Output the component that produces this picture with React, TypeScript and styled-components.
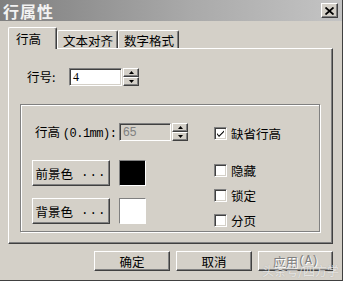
import React from "react";
import styled, { createGlobalStyle, css } from "styled-components";

const Global = createGlobalStyle`
  html, body { margin: 0; padding: 0; background: #d4d0c8; }
  * { box-sizing: border-box; }
  body { font-family: "SimSun", "Noto Sans CJK SC", sans-serif; font-size: 12px; color: #000; }
`;

const raised = css`
  border-top: 1px solid #ffffff;
  border-left: 1px solid #ffffff;
  border-right: 1px solid #404040;
  border-bottom: 1px solid #404040;
  box-shadow: inset -1px -1px 0 #808080;
`;

const sunken = css`
  border-top: 1px solid #808080;
  border-left: 1px solid #808080;
  border-right: 1px solid #ffffff;
  border-bottom: 1px solid #ffffff;
  box-shadow: inset 1px 1px 0 #404040, inset -1px -1px 0 #d4d0c8;
`;

const Window = styled.div`
  width: 343px;
  height: 281px;
  background: #d4d0c8;
  border-right: 1px solid #404040;
  border-bottom: 1px solid #404040;
  display: flex;
  flex-direction: column;
  overflow: hidden;
  position: relative;
`;

const TitleBar = styled.div`
  height: 21px;
  background: linear-gradient(to right, #7f7f7f, #a9a9a9 55%, #c4c4c4);
  display: flex;
  align-items: center;
  justify-content: space-between;
  padding: 0 4px 0 3px;
`;

const Title = styled.span`
  color: #f2f2f2;
  font-weight: bold;
  font-size: 16px;
  letter-spacing: 1px;
  font-family: "Noto Sans CJK SC", sans-serif;
  line-height: 20px;
`;

const CloseBtn = styled.div`
  width: 17px;
  height: 15px;
  background: #d4d0c8;
  ${raised};
  display: flex;
  align-items: center;
  justify-content: center;
`;

const Body = styled.div`
  flex: 1;
  display: flex;
  flex-direction: column;
  padding: 6px 9px 0 8px;
`;

const TabRow = styled.div`
  display: flex;
  align-items: flex-end;
  height: 21px;
  position: relative;
  z-index: 1;
`;

const Tab = styled.div<{ $active?: boolean }>`
  height: ${(p) => (p.$active ? 22 : 18)}px;
  padding: ${(p) => (p.$active ? "3px 15px 0 7px" : "2px 4px 0 5px")};
  margin-bottom: ${(p) => (p.$active ? -1 : 0)}px;
  background: #d4d0c8;
  border-top: 1px solid #ffffff;
  border-left: 1px solid #ffffff;
  border-right: 1px solid #404040;
  box-shadow: inset -1px 0 0 #808080;
  border-radius: 2px 2px 0 0;
  font-family: "Noto Sans CJK SC", sans-serif;
  font-size: 12.5px;
  line-height: 15px;
  white-space: nowrap;
`;

const Panel = styled.div`
  height: 196px;
  ${raised};
  padding: 18px 11px 0 11px;
  display: flex;
  flex-direction: column;
`;

const Row = styled.div<{ $gap?: number; $indent?: number }>`
  display: flex;
  align-items: center;
  gap: ${(p) => p.$gap ?? 0}px;
  margin-left: ${(p) => p.$indent ?? 0}px;
`;

const Label = styled.span<{ $w?: number }>`
  width: ${(p) => (p.$w ? `${p.$w}px` : "auto")};
  font-family: "Noto Sans CJK SC", sans-serif;
  font-size: 12.5px;
  white-space: nowrap;
  color: #000;
`;

const Mono = styled.span`
  font-family: "Liberation Mono", monospace;
  font-size: 12px;
  letter-spacing: -0.5px;
`;

const Input = styled.div<{ $w: number; $disabled?: boolean }>`
  width: ${(p) => p.$w}px;
  height: 18px;
  ${sunken};
  background: ${(p) => (p.$disabled ? "#d4d0c8" : "#ffffff")};
  color: ${(p) => (p.$disabled ? "#808080" : "#000")};
  font-family: ${(p) => (p.$disabled ? '"Liberation Sans", sans-serif' : '"Liberation Serif", serif')};
  font-size: 12px;
  padding: 1px 0 0 3px;
  line-height: 15px;
`;

const Spin = styled.div`
  display: flex;
  flex-direction: column;
  width: 16px;
  height: 18px;
  margin-left: 1px;
`;

const SpinBtn = styled.div`
  flex: 1;
  background: #d4d0c8;
  ${raised};
  display: flex;
  align-items: center;
  justify-content: center;
`;

const Group = styled.div`
  margin-top: 18px;
  height: 128px;
  border: 1px solid #808080;
  box-shadow: 1px 1px 0 #ffffff, inset 1px 1px 0 #ffffff;
  display: flex;
  padding: 17px 0 0 14px;
  margin-right: 1px;
`;

const LeftCol = styled.div`
  width: 179px;
  display: flex;
  flex-direction: column;
`;

const RightCol = styled.div`
  display: flex;
  flex-direction: column;
  padding-top: 2px;
`;

const ColorRow = styled.div<{ $top: number }>`
  display: flex;
  align-items: center;
  gap: 9px;
  margin-top: ${(p) => p.$top}px;
  margin-left: -3px;
`;

const Button = styled.div<{ $w: number; $h: number; $disabled?: boolean }>`
  width: ${(p) => p.$w}px;
  height: ${(p) => p.$h}px;
  background: #d4d0c8;
  ${raised};
  display: flex;
  align-items: center;
  justify-content: center;
  font-family: "Noto Sans CJK SC", sans-serif;
  font-size: 12.5px;
  white-space: nowrap;
  color: ${(p) => (p.$disabled ? "#808080" : "#000")};
  text-shadow: ${(p) => (p.$disabled ? "1px 1px 0 #ffffff" : "none")};
`;

const Dots = styled.span`
  font-family: "Liberation Mono", monospace;
  letter-spacing: 1px;
  margin-left: 8px;
`;

const Swatch = styled.div<{ $color: string }>`
  width: 27px;
  height: 26px;
  background: ${(p) => p.$color};
  border: 1px solid #808080;
  border-right-color: #ffffff;
  border-bottom-color: #ffffff;
`;

const CheckRow = styled.div<{ $top: number }>`
  display: flex;
  align-items: center;
  gap: 4px;
  margin-top: ${(p) => p.$top}px;
`;

const CheckBox = styled.div`
  width: 13px;
  height: 13px;
  background: #fff;
  ${sunken};
  display: flex;
  align-items: center;
  justify-content: center;
`;

const Footer = styled.div`
  display: flex;
  justify-content: flex-end;
  gap: 6px;
  margin-top: 7px;
`;

const Watermark = styled.div`
  position: absolute;
  right: 3px;
  bottom: 1px;
  font-family: "Noto Sans CJK SC", sans-serif;
  font-size: 12px;
  color: rgba(255, 255, 255, 0.7);
  text-shadow: 0 0 1px rgba(120, 120, 120, 0.5);
  pointer-events: none;
`;

const Up = () => (
  <svg width="5" height="3" viewBox="0 0 5 3"><path d="M2.5 0 L5 3 L0 3Z" fill="#000" /></svg>
);
const Down = () => (
  <svg width="5" height="3" viewBox="0 0 5 3"><path d="M0 0 L5 0 L2.5 3Z" fill="#000" /></svg>
);

const Spinner = () => (
  <Spin>
    <SpinBtn><Up /></SpinBtn>
    <SpinBtn><Down /></SpinBtn>
  </Spin>
);

const Check = ({ checked }: { checked?: boolean }) => (
  <CheckBox>
    {checked && (
      <svg width="9" height="9" viewBox="0 0 9 9">
        <path d="M1 4 L3 6.5 L8 1.5 L8 3 L3 8 L1 5.5Z" fill="#000" />
      </svg>
    )}
  </CheckBox>
);

export default function App() {
  return (
    <>
      <Global />
      <Window>
        <TitleBar>
          <Title>行属性</Title>
          <CloseBtn>
            <svg width="9" height="8" viewBox="0 0 9 8">
              <path d="M0.5 0.5 L8.5 7.5 M8.5 0.5 L0.5 7.5" stroke="#000" strokeWidth="1.8" />
            </svg>
          </CloseBtn>
        </TitleBar>
        <Body>
          <TabRow>
            <Tab $active>行高</Tab>
            <Tab>文本对齐</Tab>
            <Tab>数字格式</Tab>
          </TabRow>
          <Panel>
            <Row $indent={7}>
              <Label $w={42}>行号:</Label>
              <Input $w={53}>4</Input>
              <Spinner />
            </Row>
            <Group>
              <LeftCol>
                <Row>
                  <Label $w={84}>
                    行高 <Mono>(0.1mm):</Mono>
                  </Label>
                  <Input $w={52} $disabled>65</Input>
                  <Spinner />
                </Row>
                <ColorRow $top={19}>
                  <Button $w={78} $h={26}>前景色<Dots>...</Dots></Button>
                  <Swatch $color="#000000" />
                </ColorRow>
                <ColorRow $top={12}>
                  <Button $w={78} $h={26}>背景色<Dots>...</Dots></Button>
                  <Swatch $color="#ffffff" />
                </ColorRow>
              </LeftCol>
              <RightCol>
                <CheckRow $top={0}>
                  <Check checked />
                  <Label>缺省行高</Label>
                </CheckRow>
                <CheckRow $top={18}>
                  <Check />
                  <Label>隐藏</Label>
                </CheckRow>
                <CheckRow $top={6}>
                  <Check />
                  <Label>锁定</Label>
                </CheckRow>
                <CheckRow $top={6}>
                  <Check />
                  <Label>分页</Label>
                </CheckRow>
              </RightCol>
            </Group>
          </Panel>
          <Footer>
            <Button $w={76} $h={20}>确定</Button>
            <Button $w={76} $h={20}>取消</Button>
            <Button $w={75} $h={20} $disabled>应用<Mono>(A)</Mono></Button>
          </Footer>
        </Body>
        <Watermark>头条号/四方学</Watermark>
      </Window>
    </>
  );
}
